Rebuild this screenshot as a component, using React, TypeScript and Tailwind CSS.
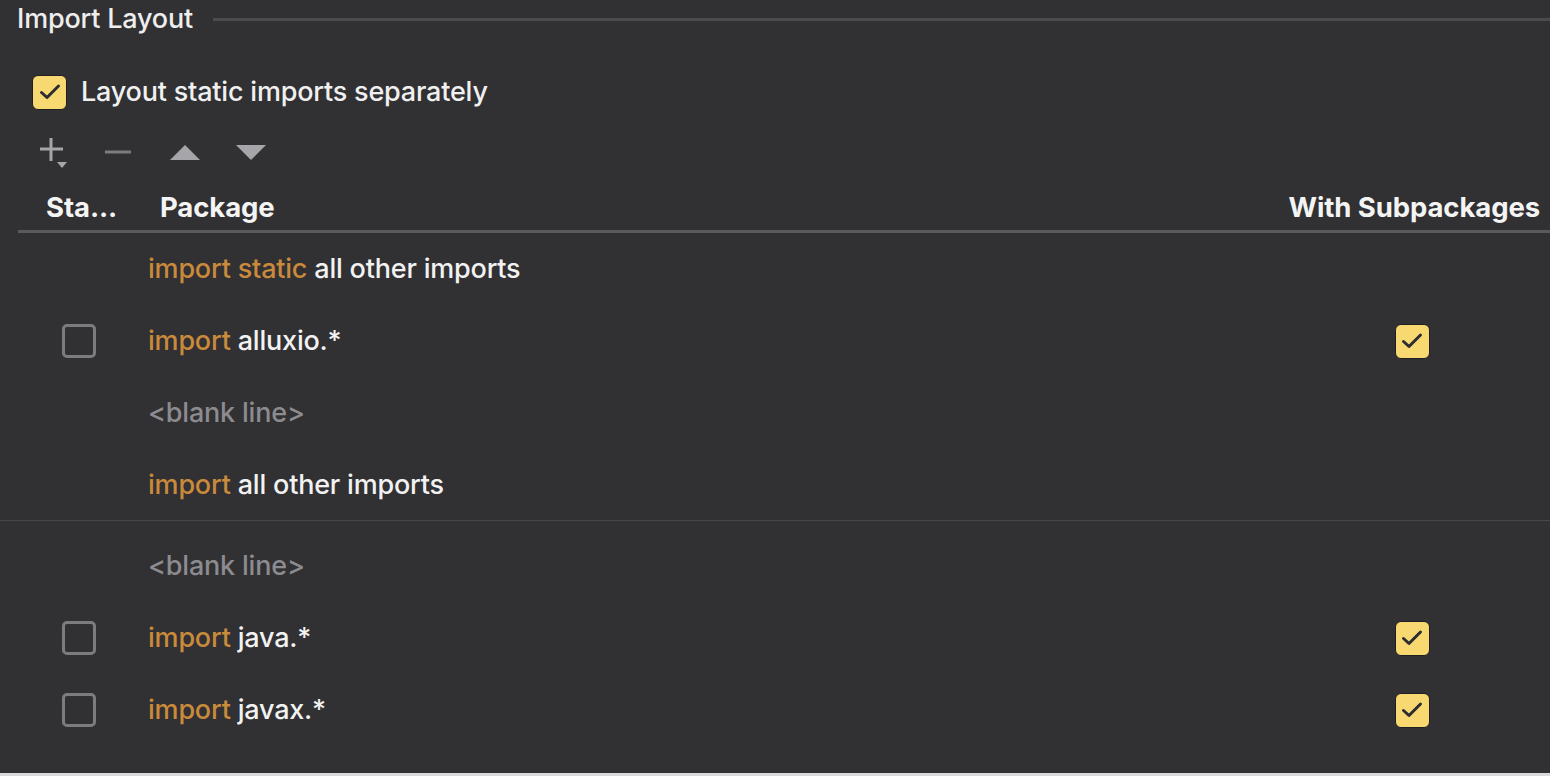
import React from 'react';

type Row = {
  kind: 'import' | 'blank';
  keyword?: string;
  name?: string;
  hasStatic?: boolean;
  sub?: boolean;
};

const upper: Row[] = [
  { kind: 'import', keyword: 'import static', name: 'all other imports' },
  { kind: 'import', keyword: 'import', name: 'alluxio.*', hasStatic: true, sub: true },
  { kind: 'blank' },
  { kind: 'import', keyword: 'import', name: 'all other imports' },
];

const lower: Row[] = [
  { kind: 'blank' },
  { kind: 'import', keyword: 'import', name: 'java.*', hasStatic: true, sub: true },
  { kind: 'import', keyword: 'import', name: 'javax.*', hasStatic: true, sub: true },
];

function CheckedBox() {
  return (
    <div className="w-[35px] h-[35px] rounded-[6px] bg-[#f7d871] border border-[#1f1e22] flex items-center justify-center">
      <svg width="26" height="26" viewBox="0 0 26 26" fill="none">
        <path d="M4.5 13.5l5.5 5L21.5 7" stroke="#2d2c30" strokeWidth="3" strokeLinecap="round" strokeLinejoin="round" />
      </svg>
    </div>
  );
}

function EmptyBox() {
  return <div className="w-[34px] h-[34px] rounded-[5px] border-[3px] border-[#7c7b7f]" />;
}

function ImportRow({ row }: { row: Row }) {
  return (
    <div className="h-[72px] flex items-center">
      <div className="w-[148px] flex justify-center pl-[14px] pr-[5px]">
        <div className="w-[35px] flex justify-center">{row.hasStatic && <EmptyBox />}</div>
      </div>
      <div className="flex-1 text-[27px] font-medium tracking-[-0.2px]">
        {row.kind === 'blank' ? (
          <span className="text-[#8c8b8f]">&lt;blank line&gt;</span>
        ) : (
          <>
            <span className="text-[#c98a3c]">{row.keyword}</span>{' '}
            <span className="text-[#f2f2f2]">{row.name}</span>
          </>
        )}
      </div>
      <div className="w-[276px] flex justify-center">{row.sub && <CheckedBox />}</div>
    </div>
  );
}

export default function App() {
  return (
    <div
      className="w-[1550px] h-[776px] bg-[#313033] overflow-hidden flex flex-col"
      style={{ fontFamily: 'Inter, "Noto Sans", sans-serif' }}
    >
      <div className="h-[38px] flex items-center pl-[17px]">
        <span className="text-[27px] font-medium text-[#eeeeee] tracking-[-0.2px]">Import Layout</span>
        <div className="flex-1 h-[3px] bg-[#4b4a4e] ml-[20px]" />
      </div>

      <div className="h-[40px] mt-[34px] flex items-center pl-[32px]">
        <CheckedBox />
        <span className="ml-[14px] text-[27px] font-medium text-[#f0f0f0] tracking-[-0.2px]">
          Layout static imports separately
        </span>
      </div>

      <div className="h-[40px] mt-[20px] flex items-center pl-[38px]">
        <svg width="32" height="34" viewBox="0 0 32 34" fill="none">
          <path d="M13 3v23M2 14h23" stroke="#a6a5a9" strokeWidth="3" />
          <path d="M19 27h10l-5 6z" fill="#a6a5a9" />
        </svg>
        <svg width="32" height="32" viewBox="0 0 32 32" fill="none" className="ml-[32px]">
          <path d="M3 16h26" stroke="#7d7c80" strokeWidth="3" />
        </svg>
        <svg width="36" height="32" viewBox="0 0 36 32" fill="none" className="ml-[33px]">
          <path d="M3 24h30L18 9z" fill="#a6a5a9" />
        </svg>
        <svg width="36" height="32" viewBox="0 0 36 32" fill="none" className="ml-[30px]">
          <path d="M3 9h30L18 24z" fill="#a6a5a9" />
        </svg>
      </div>

      <div className="h-[44px] mt-[14px] flex items-center ml-[18px] text-[27.5px] font-bold text-[#f4f4f4] tracking-[-0.1px]">
        <span className="w-[142px] pl-[28px]">Sta...</span>
        <span className="flex-1">Package</span>
        <span className="pr-[10px]">With Subpackages</span>
      </div>
      <div className="h-[3px] bg-[#5a595d] ml-[18px]" />

      {upper.map((r, i) => (
        <ImportRow key={i} row={r} />
      ))}
      <div className="h-px bg-[#47464a] -mt-[1px]" />
      <div className="mt-[9px]">
        {lower.map((r, i) => (
          <ImportRow key={i} row={r} />
        ))}
      </div>
      <div className="flex-1" />
      <div className="h-[3px] bg-[#d9d9d9]" />
    </div>
  );
}
